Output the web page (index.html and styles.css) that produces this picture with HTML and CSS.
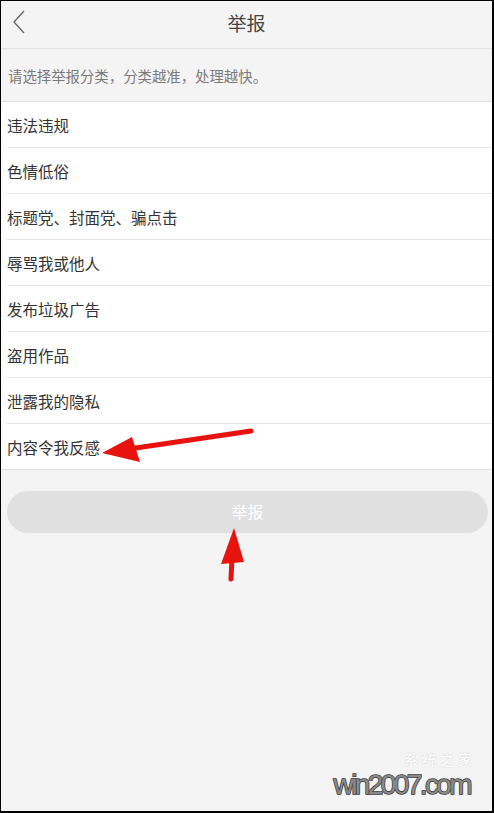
FILE: index.html
```html
<!DOCTYPE html>
<html lang="zh-CN">
<head>
    <meta charset="UTF-8">
    <meta name="viewport" content="width=device-width, initial-scale=1.0">
    <title>举报</title>
    <link rel="stylesheet" href="styles.css">
</head>
<body>
    <div class="report-page">
        <div class="top-bar">
            <span class="back-btn">
                <svg width="14" height="24" viewBox="0 0 14 24">
                    <path d="M12 1 L2 12 L12 23" fill="none" stroke="#6a6a6a" stroke-width="1.4"/>
                </svg>
            </span>
            <h1 class="title">举报</h1>
        </div>
        <div class="hint">请选择举报分类，分类越准，处理越快。</div>
        <ul class="reason-list">
            <li>违法违规</li>
            <li>色情低俗</li>
            <li>标题党、封面党、骗点击</li>
            <li>辱骂我或他人</li>
            <li>发布垃圾广告</li>
            <li>盗用作品</li>
            <li>泄露我的隐私</li>
            <li>内容令我反感</li>
        </ul>
        <button type="button" class="submit-btn">举报</button>

        <!-- red arrows drawn on top of the screenshot -->
        <svg class="arrows" width="491" height="810" viewBox="0 0 491 810">
            <line x1="250" y1="430" x2="128" y2="448" stroke="#e8130f" stroke-width="5" stroke-linecap="round"/>
            <polygon points="101,452 131,436 139,461" fill="#e8130f"/>
            <line x1="231" y1="556" x2="230" y2="578" stroke="#e8130f" stroke-width="5" stroke-linecap="round"/>
            <polygon points="233,527 220,563 243,561" fill="#e8130f"/>
        </svg>

        <div class="watermark">
            <span class="wm-back">系统之家</span>
            <span class="wm-text">win2007.com</span>
        </div>
    </div>
</body>
</html>
```

FILE: styles.css
```css
body {
    margin: 0;
    font-family: "Noto Sans CJK SC", "Noto Sans", sans-serif;
    background-color: #000;
}
.report-page {
    position: relative;
    width: 494px;
    height: 813px;
    box-sizing: border-box;
    border-style: solid;
    border-color: #000;
    border-width: 1px 2px 2px 1px;
    background-color: #f4f4f4;
    overflow: hidden;
}
.top-bar {
    position: relative;
    height: 43px;
    padding-bottom: 4px;
    display: flex;
    align-items: center;
    justify-content: center;
    border-bottom: 1px solid #e2e2e2;
}
.back-btn {
    position: absolute;
    left: 11px;
    top: 9px;
}
.title {
    margin: 0;
    font-size: 19px;
    font-weight: normal;
    color: #444;
}
.hint {
    height: 52px;
    padding-left: 7px;
    display: flex;
    align-items: center;
    font-size: 14.4px;
    color: #7a7a7a;
    border-bottom: 1px solid #e2e2e2;
}
.reason-list {
    list-style: none;
    margin: 0;
    padding: 0 0 0 6px;
    background-color: #fff;
    border-bottom: 1px solid #e2e2e2;
}
.reason-list li {
    height: 45px;
    display: flex;
    align-items: center;
    font-size: 15.5px;
    color: #333;
    border-bottom: 1px solid #e6e6e6;
}
.reason-list li:last-child {
    border-bottom: none;
}
.submit-btn {
    display: block;
    width: 481px;
    height: 42px;
    margin: 21px 0 0 6px;
    padding: 0 0 3px;
    border: none;
    border-radius: 21px;
    background-color: #e0e0e0;
    color: #fff;
    font-family: inherit;
    font-size: 16px;
}
.arrows {
    position: absolute;
    left: 0;
    top: 0;
}
.watermark {
    position: absolute;
    right: 22px;
    bottom: 10px;
}
.wm-back {
    position: absolute;
    right: -6px;
    top: -17px;
    font-size: 14px;
    line-height: 14px;
    color: #fff;
    letter-spacing: 4px;
    text-shadow: 0 0 2px #ccc;
}
.wm-text {
    position: relative;
    font-family: "Liberation Sans", Arial, sans-serif;
    font-size: 28px;
    letter-spacing: -2.6px;
    color: #8a8a8a;
    -webkit-text-stroke: 1.5px #3a3a3a;
    paint-order: stroke fill;
}
```
